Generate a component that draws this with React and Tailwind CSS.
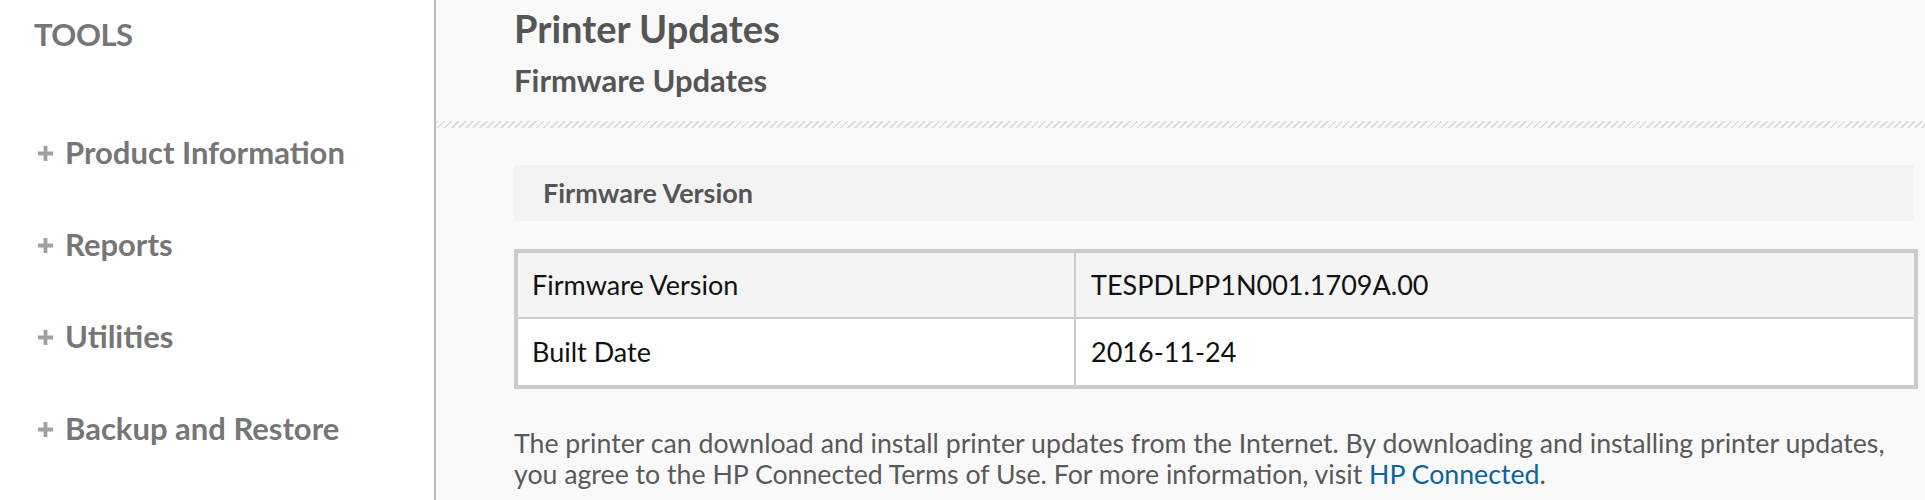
const navItems = ['Product Information', 'Reports', 'Utilities', 'Backup and Restore']

const rows = [
  { label: 'Firmware Version', value: 'TESPDLPP1N001.1709A.00' },
  { label: 'Built Date', value: '2016-11-24' },
]

export default function App() {
  return (
    <div className="flex h-[500px] w-[1925px] overflow-hidden font-[Lato,sans-serif]">
      {/* Sidebar */}
      <aside className="w-[436px] shrink-0 border-r-2 border-[#bbbbbb] bg-white pl-[34px] pt-[14px]">
        <h2 className="text-[31px] font-bold leading-[40px] tracking-[-0.5px] text-[#767676]">TOOLS</h2>
        <nav className="mt-[80px] flex flex-col gap-[56px]">
          {navItems.map((item) => (
            <div key={item} className="flex items-center text-[31px] font-bold leading-[36px] text-[#767676]">
              <svg viewBox="0 0 18 18" className="ml-[3px] mr-[11px] mt-[2px] h-[17px] w-[17px] text-[#a0a0a0]">
                <path d="M9 1v16M1 9h16" stroke="currentColor" strokeWidth="4" />
              </svg>
              <span>{item}</span>
            </div>
          ))}
        </nav>
      </aside>

      {/* Main */}
      <main className="flex-1 bg-[#f9f9f9]">
        <div className="h-[121px] pl-[78px] pt-[6px] text-[#555555]">
          <h1 className="text-[38px] font-bold leading-[45px]">Printer Updates</h1>
          <h2 className="mt-[11px] text-[31px] font-bold leading-[36px]">Firmware Updates</h2>
        </div>
        <div className="h-[7px] bg-[repeating-linear-gradient(135deg,#dedede_0px,#dedede_2px,transparent_2px,transparent_5px)]" />

        <div className="pl-[78px] pr-[7px] pt-[37px]">
          <div className="mr-[4px] flex h-[56px] items-center bg-[#f3f3f3] pl-[29px] text-[27px] font-bold text-[#555555]">
            Firmware Version
          </div>

          <div className="mt-[28px] border-4 border-[#cccccc]">
            {rows.map((row, i) => (
              <div
                key={row.label}
                className={`flex h-[66px] ${i === 0 ? 'border-b-2 border-[#cccccc] bg-[#f4f4f4]' : 'bg-white'}`}
              >
                <div className="flex w-[558px] items-center border-r-2 border-[#cccccc] pl-[14px] text-[27px] text-[#111111]">
                  {row.label}
                </div>
                <div className="flex flex-1 items-center pl-[15px] text-[27px] text-[#111111]">{row.value}</div>
              </div>
            ))}
          </div>

          <p className="mt-[39px] text-[26.7px] leading-[31px] text-[#595959]">
            The printer can download and install printer updates from the Internet. By downloading and installing printer updates,
            <br />
            you agree to the HP Connected Terms of Use. For more information, visit{' '}
            <a href="#" className="text-[#0a64a0]">HP Connected</a>.
          </p>
        </div>
      </main>
    </div>
  )
}
